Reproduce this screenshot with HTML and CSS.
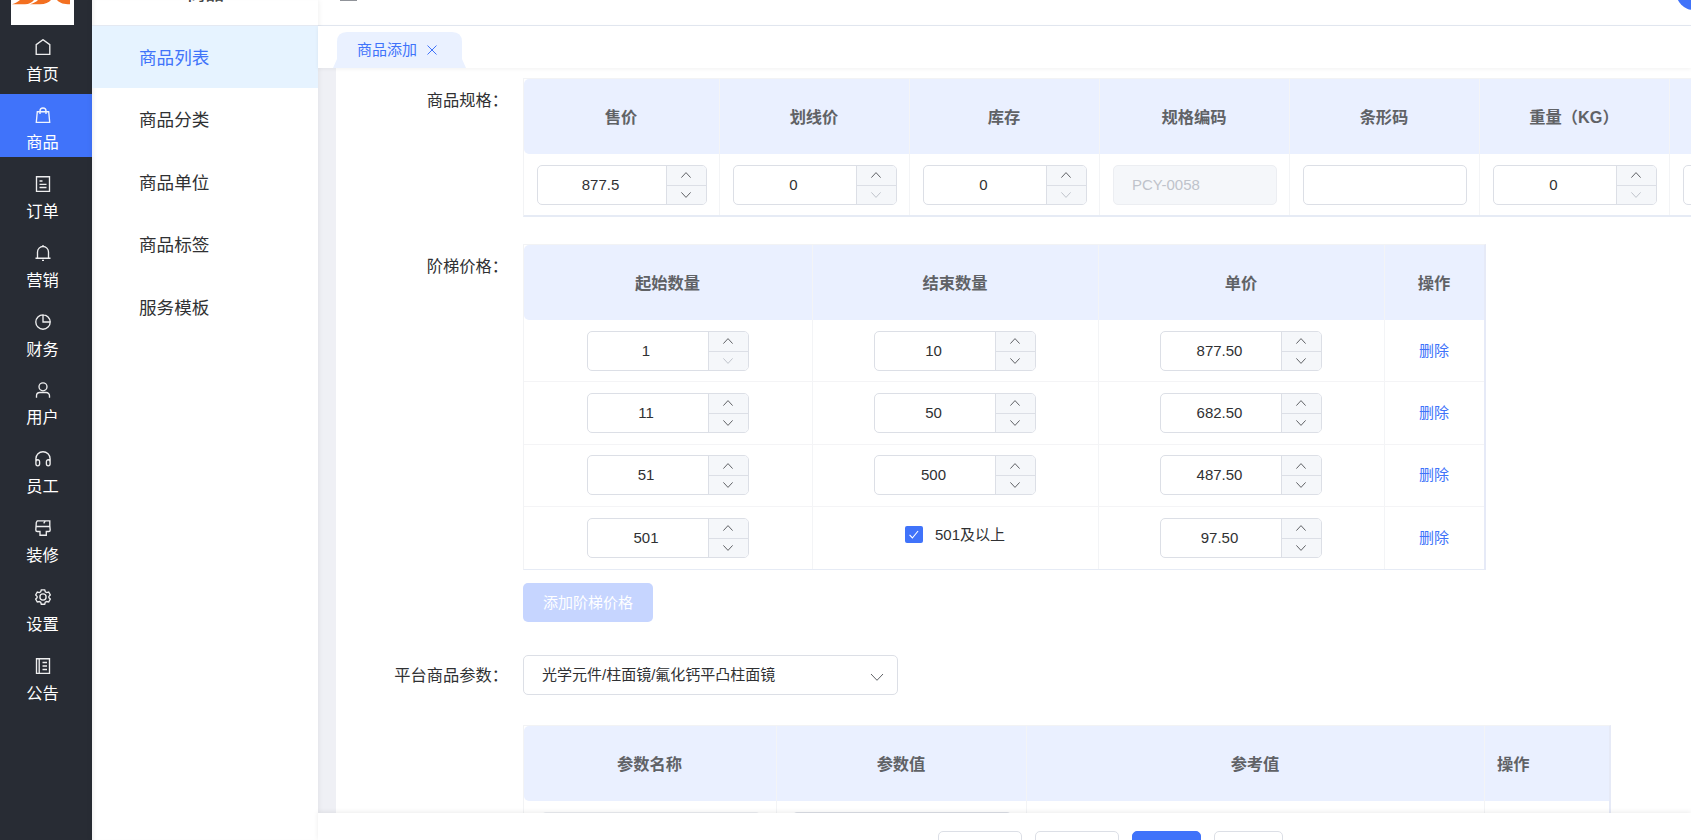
FILE: index.html
```html
<!DOCTYPE html>
<html lang="zh-CN">
<head>
<meta charset="utf-8">
<title>商品添加</title>
<link rel="stylesheet" href="styles.css">
</head>
<body>
<svg class="defs" aria-hidden="true">
  <symbol id="up" viewBox="0 0 12 12"><path d="M1.400 8.600 6 3.600l4.600 5"/></symbol>
  <symbol id="down" viewBox="0 0 12 12"><path d="M1.400 3.400 6 8.400l4.600-5"/></symbol>
</svg>
<div class="app">
  <nav class="rail">
    <div class="logo"><svg viewBox="0 0 63 25"><path d="M1 4.300C4 3.500 7 1.500 9 0h14c-2 2.500-5 4.300-9 4.300zM19 4.300C22 3.500 25 2 27 0h13c-2 2.500-6 4.300-11 4.300zM46 0h13v4.300c-6 0-10-1-13-4.300z"/></svg></div>
    <a class="rail-item"><svg viewBox="0 0 16 16"><path d="M1.200 15.300V5.600L8 .7l6.800 4.900v9.700z"/></svg><span>首页</span></a>
    <a class="rail-item active"><svg viewBox="0 0 16 16"><path d="M2.300 4.700h11.400l1 10.600H1.300zM5 7V4a3 3 0 0 1 6 0v3"/></svg><span>商品</span></a>
    <a class="rail-item"><svg viewBox="0 0 16 16"><path d="M1.500.7h13v14.600h-13zM4.500 5h3M4.500 8.300h7M4.500 11.500h7"/></svg><span>订单</span></a>
    <a class="rail-item"><svg viewBox="0 0 16 16"><path d="M.5 13.200h15M2.500 13V7a5.500 5.500 0 0 1 11 0v6M8 0v1.500M7 15.300h2"/></svg><span>营销</span></a>
    <a class="rail-item"><svg viewBox="0 0 16 16"><path d="M8 .8A7.200 7.200 0 1 0 15.200 8H8zM8 .8A7.200 7.200 0 0 1 15.200 8"/></svg><span>财务</span></a>
    <a class="rail-item"><svg viewBox="0 0 16 16"><circle cx="8" cy="4.800" r="4"/><path d="M1.500 15.800v-2a3.300 3.300 0 0 1 3.300-3.300h6.400a3.300 3.300 0 0 1 3.300 3.300v2"/></svg><span>用户</span></a>
    <a class="rail-item"><svg viewBox="0 0 16 16"><path d="M.9 12V7.800a7.100 7.100 0 0 1 14.200 0V12M.9 11c0-3 3.700-3 3.700-.2v2c0 2.700-3.700 2.700-3.700 0zM15.100 11c0-3-3.700-3-3.700-.2v2c0 2.700 3.700 2.700 3.700 0z"/></svg><span>员工</span></a>
    <a class="rail-item"><svg viewBox="0 0 16 16"><path d="M2.300.9h12.500v5L15.200 10a1.500 1.500 0 0 1-1.500 1.500h-2.400v3.700H5v-3.700H2.300A1.500 1.500 0 0 1 .8 10l.5-7.500zM1 6.500h14M8.700 3.300l1.600-2.400"/></svg><span>装修</span></a>
    <a class="rail-item"><svg viewBox="0 0 16 16"><path d="M6.300.8h3.400l.6 2 1.300.8 2.100-.6 1.600 2.900L13.900 7.400v1.300l1.400 1.400-1.600 2.900-2.100-.5-1.300.7-.6 2H6.300l-.6-2-1.300-.7-2.100.5L.7 10.100l1.400-1.400V7.400L.7 5.900 2.300 3l2.100.6 1.300-.8z"/><circle cx="8" cy="8" r="3.100"/></svg><span>设置</span></a>
    <a class="rail-item"><svg viewBox="0 0 16 16"><path d="M1.500.7h13v14.600h-13zM4.200.7v14.600M7.500 4.500h4.500M7.500 8H12M7.500 11.500h4.500"/></svg><span>公告</span></a>
  </nav>

  <aside class="submenu">
    <div class="submenu-title"><span>商品</span></div>
    <a class="sub active">商品列表</a>
    <a class="sub">商品分类</a>
    <a class="sub">商品单位</a>
    <a class="sub">商品标签</a>
    <a class="sub">服务模板</a>
  </aside>

  <main class="main">
    <header class="topbar">
      <i class="fold"></i>
      <div class="tools"><i class="tick"></i><i class="grid"></i><i class="grid"></i><i class="avatar"></i></div>
    </header>
    <div class="tabs">
      <div class="tab"><span>商品添加</span><svg viewBox="0 0 10 10"><path d="M.5.5l9 9M9.500.5l-9 9"/></svg></div>
    </div>

    <section class="content">
      <div class="form">
        <div class="row row-spec">
          <label>商品规格：</label>
          <div class="table spec">
            <div class="tr th"><div>售价</div><div>划线价</div><div>库存</div><div>规格编码</div><div>条形码</div><div>重量（KG）</div><div></div></div>
            <div class="tr">
              <div><div class="num"><span>877.5</span><div class="ctl"><b><svg><use href="#up"/></svg></b><b><svg><use href="#down"/></svg></b></div></div></div>
              <div><div class="num"><span>0</span><div class="ctl"><b><svg><use href="#up"/></svg></b><b class="off"><svg><use href="#down"/></svg></b></div></div></div>
              <div><div class="num"><span>0</span><div class="ctl"><b><svg><use href="#up"/></svg></b><b class="off"><svg><use href="#down"/></svg></b></div></div></div>
              <div><div class="text disabled">PCY-0058</div></div>
              <div><div class="text"></div></div>
              <div><div class="num"><span>0</span><div class="ctl"><b><svg><use href="#up"/></svg></b><b class="off"><svg><use href="#down"/></svg></b></div></div></div>
              <div><div class="text"></div></div>
            </div>
          </div>
        </div>

        <div class="row row-ladder">
          <label>阶梯价格：</label>
          <div>
            <div class="table ladder">
              <div class="tr th"><div>起始数量</div><div>结束数量</div><div>单价</div><div>操作</div></div>
              <div class="tr">
                <div><div class="num"><span>1</span><div class="ctl"><b><svg><use href="#up"/></svg></b><b class="off"><svg><use href="#down"/></svg></b></div></div></div>
                <div><div class="num"><span>10</span><div class="ctl"><b><svg><use href="#up"/></svg></b><b><svg><use href="#down"/></svg></b></div></div></div>
                <div><div class="num"><span>877.50</span><div class="ctl"><b><svg><use href="#up"/></svg></b><b><svg><use href="#down"/></svg></b></div></div></div>
                <div><a class="del">删除</a></div>
              </div>
              <div class="tr">
                <div><div class="num"><span>11</span><div class="ctl"><b><svg><use href="#up"/></svg></b><b><svg><use href="#down"/></svg></b></div></div></div>
                <div><div class="num"><span>50</span><div class="ctl"><b><svg><use href="#up"/></svg></b><b><svg><use href="#down"/></svg></b></div></div></div>
                <div><div class="num"><span>682.50</span><div class="ctl"><b><svg><use href="#up"/></svg></b><b><svg><use href="#down"/></svg></b></div></div></div>
                <div><a class="del">删除</a></div>
              </div>
              <div class="tr">
                <div><div class="num"><span>51</span><div class="ctl"><b><svg><use href="#up"/></svg></b><b><svg><use href="#down"/></svg></b></div></div></div>
                <div><div class="num"><span>500</span><div class="ctl"><b><svg><use href="#up"/></svg></b><b><svg><use href="#down"/></svg></b></div></div></div>
                <div><div class="num"><span>487.50</span><div class="ctl"><b><svg><use href="#up"/></svg></b><b><svg><use href="#down"/></svg></b></div></div></div>
                <div><a class="del">删除</a></div>
              </div>
              <div class="tr">
                <div><div class="num"><span>501</span><div class="ctl"><b><svg><use href="#up"/></svg></b><b><svg><use href="#down"/></svg></b></div></div></div>
                <div><div class="check"><i><svg viewBox="0 0 18 18"><path d="M4.300 9.300 7.300 12.700 13.300 5.300"/></svg></i><span>501及以上</span></div></div>
                <div><div class="num"><span>97.50</span><div class="ctl"><b><svg><use href="#up"/></svg></b><b><svg><use href="#down"/></svg></b></div></div></div>
                <div><a class="del">删除</a></div>
              </div>
            </div>
            <div class="add">添加阶梯价格</div>
          </div>
        </div>

        <div class="row row-params">
          <label>平台商品参数：</label>
          <div>
            <div class="select"><span>光学元件/柱面镜/氟化钙平凸柱面镜</span><svg viewBox="0 0 14 14"><path d="M1 4l6 6.300L13 4"/></svg></div>
            <div class="table params">
              <div class="tr th"><div>参数名称</div><div>参数值</div><div>参考值</div><div class="left">操作</div></div>
              <div class="tr"><div><div class="text disabled"></div></div><div><div class="text"></div></div><div></div><div></div></div>
            </div>
          </div>
        </div>
      </div>
    </section>

    <footer class="actions"><i class="btn wide"></i><i class="btn wide"></i><i class="btn primary"></i><i class="btn"></i></footer>
  </main>
</div>
</body>
</html>
```
FILE: styles.css
```css
* { box-sizing: border-box; }
body {
  margin: 0;
  width: 1691px;
  height: 840px;
  overflow: hidden;
  background: #fff;
  color: #303133;
  font: 15px/20px "Liberation Sans", "Noto Sans CJK SC", sans-serif;
}
.defs { display: none; }
svg { display: block; fill: none; stroke: currentColor; }
.app { display: flex; height: 840px; }

/* primary rail */
.rail { width: 92px; flex: none; background: #282c34; color: #fff; }
.logo { width: 63px; height: 25px; margin-left: 11px; background: #fff; }
.logo svg { fill: #f37021; stroke: none; }
.rail-item {
  display: flex;
  flex-direction: column;
  align-items: center;
  height: 63px;
  margin-bottom: 5.800px;
  padding: 13.500px 7px 0 0;
  font-size: 16.250px;
}
.rail-item svg { width: 16px; height: 16px; stroke-width: 1.350; opacity: .92; }
.rail-item span { margin-top: 9px; }
.rail-item.active { background: #4073fa; }

/* secondary menu */
.submenu { width: 226px; flex: none; box-shadow: inset 4px 0 4px -3px #00000014, 0 0 6px #00000014; z-index: 1; background: #fff; }
.submenu-title { height: 26px; overflow: hidden; border-bottom: 1px solid #e4e9f2; padding-left: 95px; }
.submenu-title span { display: block; margin-top: -16px; font-size: 18.500px; color: #444; font-weight: 500; }
.sub { display: flex; align-items: center; height: 62.500px; padding: 2px 0 0 47px; font-size: 17.600px; }
.sub.active { margin-top: -.5px; background: #e6f3ff; color: #4073fa; }

.main { flex: 1; min-width: 0; display: flex; flex-direction: column; background: #eff0f5; }
.topbar { display: flex; justify-content: space-between; height: 26px; flex: none; background: #fff; border-bottom: 1px solid #e4e9f2; padding-left: 22px; overflow: hidden; }
.fold { width: 17px; height: 1px; background: #909399; }
.tools { display: flex; width: 128px; flex: none; }
.tick { width: 1px; height: 1px; background: #aaa; margin-right: 73px; }
.grid { width: 5px; height: 1px; margin-right: 5px; background: #999; }
.avatar { width: 36px; height: 36px; margin: -26px 0 0 20px; border-radius: 50%; background: #4073fa; flex: none; }

.tabs { height: 42px; flex: none; background: #fff; padding: 6px 0 0 15px; box-shadow: 0 1px 4px #0000000f; z-index: 1; }
.tab {
  display: flex;
  align-items: center;
  gap: 10px;
  width: 133px;
  height: 36px;
  padding-left: 24px;
  background: #eaf1ff;
  color: #4073fa;
  clip-path: path("M0 36 L4 27 V10 Q4 0 14 0 H119 Q129 0 129 10 V27 L133 36 Z");
}
.tab svg { width: 10px; height: 10px; }

.content { flex: 1; min-height: 0; padding-left: 18px; overflow: hidden; }
.form { height: 100%; padding-top: 10px; background: #fff; overflow: hidden; }
.row { display: flex; }
.row label { width: 187px; flex: none; padding: 12px 15px 0 0; text-align: right; font-size: 16.250px; white-space: nowrap; }

/* tables */
.table { border: 1px solid #f2f3f5; border-bottom: 2px solid #e6ebf5; }
.tr { display: grid; height: 62.500px; border-bottom: 1px solid #f4f4f6; }
.tr:last-child { border-bottom: 0; }
.tr > div { display: flex; align-items: center; justify-content: center; border-right: 1px solid #f3f4f6; padding: 0 12px 0 13px; }
.tr > div:last-child { border-right: 0; }
.th { height: 75px; border: 0; background: #eaf0ff; border-radius: 5px 0 0 5px; color: #606266; font-size: 16.250px; font-weight: 700; }
.tr.th > div { padding: 0 13px 0 12px; }
.spec { width: 1340px; flex: none; }
.spec .tr { grid-template-columns: 196px repeat(6, 190px); }
.spec .tr:last-child { height: 61px; }
.ladder { width: 963px; border-bottom-width: 1px; border-right: 2px solid #e6eaf7; }
.ladder .tr { grid-template-columns: 289px 286px 286px 99px; }
.ladder .tr:not(.th) { height: 62.250px; }
.ladder .tr:not(.th) > div { padding: 0 13px 0 12px; }
.ladder .num { width: 162px; }
.params { width: 1088px; margin-top: 30px; border-right: 2px solid #e6eaf7; }
.params .tr { grid-template-columns: 253px 250px 458px 124px; }
.params .tr > .left { justify-content: flex-start; }
.params .text { width: 220px; }

/* fields */
.num, .text, .select { width: 100%; height: 40px; border: 1px solid #dcdfe6; border-radius: 5px; background: #fff; }
.num { display: flex; overflow: hidden; }
.num > span { flex: 1; padding-right: 3px; text-align: center; line-height: 37px; }
.ctl { width: 40px; border-left: 1px solid #dcdfe6; background: #f5f7fa; color: #606266; }
.ctl b { display: flex; align-items: center; justify-content: center; height: 18px; padding-right: 1px; }
.ctl b:first-child { height: 20px; border-bottom: 1px solid #dcdfe6; }
.ctl svg { width: 12px; height: 12px; stroke-width: 1; }
.ctl .off { color: #c0c4cc; }
.text { padding-left: 18px; line-height: 37px; }
.text.disabled { background: #f5f7fa; border-color: #eceef2; color: #bfc3cb; }
.del { color: #4073fa; }
.check { display: flex; gap: 12px; align-items: center; margin-top: -6px; }
.check i { width: 18px; height: 17px; border-radius: 2px; background: #4073fa; color: #fff; }
.check svg { width: 18px; height: 17px; stroke-width: 1.2; }
.add { width: 130px; height: 39px; margin-top: 13px; border-radius: 5px; background: #c6d5ff; color: #fff; text-align: center; line-height: 39px; }
.select { width: 375px; display: flex; align-items: center; justify-content: space-between; padding: 0 13px 1px 18px; }
.select svg { width: 14px; height: 14px; color: #606266; margin-top: 4px; }

.row-ladder { margin-top: 27px; }
.row-params { margin-top: 33px; }
.row-params label { padding-top: 10px; }

.actions { display: flex; justify-content: center; gap: 13px; height: 27px; flex: none; padding: 18px 0 0 211px; background: #fff; box-shadow: 0 -1px 5px #00000014; z-index: 1; overflow: hidden; }
.btn { width: 69px; height: 40px; flex: none; border: 1px solid #dcdfe6; border-radius: 5px; }
.btn.wide { width: 84px; }
.btn.primary { background: #4073fa; border-color: #4073fa; }
.tools .avatar { margin-left: 30px; }
```
